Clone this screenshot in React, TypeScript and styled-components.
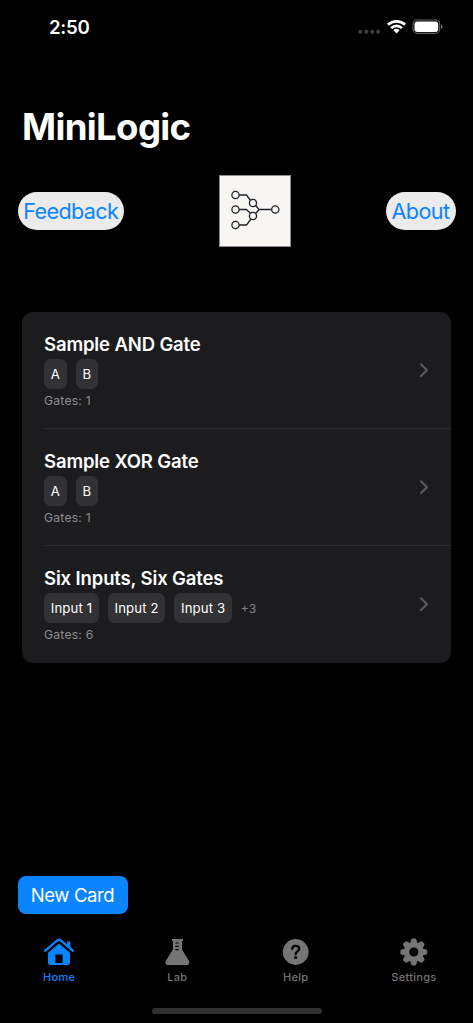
import React from 'react';
import styled, { createGlobalStyle } from 'styled-components';

const GlobalStyle = createGlobalStyle`
  * { box-sizing: border-box; }
  body { margin: 0; background: #000; }
`;

const Screen = styled.div`
  width: 473px;
  height: 1023px;
  display: flex;
  flex-direction: column;
  background: #000;
  color: #fff;
  font-family: Inter, 'Liberation Sans', sans-serif;
  white-space: nowrap;
  overflow: hidden;
`;

const StatusBar = styled.header`
  height: 54px;
  flex: none;
  display: flex;
  justify-content: space-between;
  padding: 0 30px 0 49px;
`;

const Clock = styled.span`
  font-size: 18.7px;
  font-weight: 600;
  line-height: 56px;
  letter-spacing: -0.3px;
`;

const StatusIcons = styled.svg`
  display: block;
  width: 86px;
  height: 54px;
`;

const Title = styled.h1`
  margin: 51px 0 0 22px;
  height: 46px;
  font-size: 36.6px;
  line-height: 45px;
  font-weight: 700;
  letter-spacing: -0.65px;
`;

const TopRow = styled.div`
  display: flex;
  align-items: center;
  justify-content: space-between;
  height: 72px;
  margin: 24px 17.5px 0 17.5px;
`;

const Pill = styled.button<{ $width: number; $tracking: number }>`
  width: ${(p) => p.$width}px;
  height: 38px;
  padding: 0;
  border: 0;
  border-radius: 19px;
  background: #ebebeb;
  color: #0a84ff;
  font: 400 21.6px/38px Inter, sans-serif;
  letter-spacing: ${(p) => p.$tracking}px;
`;

const Logo = styled.svg`
  display: block;
  width: 72px;
  height: 72px;
  margin-left: 0.5px;
`;

const CardList = styled.main`
  margin: 65px 22px 0;
  border-radius: 11px;
  background: #1c1c1e;
`;

const Row = styled.section`
  height: 117px;
  margin-left: 22px;
  padding: 20px 22px 0 0;
  display: flex;
  justify-content: space-between;
  border-bottom: 1px solid #2d2d2f;
  &:last-child { border-bottom-color: transparent; }
`;

const RowTitle = styled.h2`
  margin: 0;
  height: 27px;
  font-size: 18.5px;
  line-height: 24px;
  font-weight: 600;
  letter-spacing: -0.13px;
`;

const Chips = styled.div`
  display: flex;
  align-items: center;
  gap: 8.8px;
  height: 30px;
`;

const Chip = styled.span`
  height: 30px;
  padding: 0 6.8px;
  border-radius: 6.6px;
  background: #323234;
  font-size: 13.2px;
  line-height: 30px;
  letter-spacing: 0.11px;
`;

const More = styled.span`
  font-size: 12.1px;
  color: #85858a;
`;

const Gates = styled.p`
  margin: 3px 0 0;
  font-size: 12.1px;
  line-height: 17px;
  letter-spacing: 0.25px;
  color: #8d8d92;
`;

const Chevron = styled.svg`
  width: 10px;
  height: 16px;
  margin-top: 30px;
`;

const NewCard = styled.button`
  width: 110px;
  height: 38px;
  margin: auto 0 0 17.5px;
  padding: 0;
  flex: none;
  border: 0;
  border-radius: 8px;
  background: #0a84ff;
  color: #fff;
  font: 400 18.5px/38px Inter, sans-serif;
  letter-spacing: -0.38px;
`;

const TabBar = styled.nav`
  display: flex;
  height: 109px;
  flex: none;
  padding-top: 23px;
`;

const Tab = styled.a<{ $active?: boolean }>`
  flex: 1;
  display: flex;
  flex-direction: column;
  align-items: center;
  color: ${(p) => (p.$active ? '#0a84ff' : '#757575')};
  font-size: 11px;
  font-weight: 500;
  line-height: 16px;
  letter-spacing: 0.3px;
  svg { display: block; width: 32px; height: 32px; }
`;

const HomeIndicator = styled.div`
  width: 170px;
  height: 6px;
  border-radius: 3px;
  background: #303030;
  position: absolute;
  left: 152px;
  top: 1008px;
`;

const HomeIcon = () => (
  <svg viewBox="0 0 32 32" fill="currentColor">
    <path d="M2 15.2 14.6 4.5Q16 3.4 17.4 4.5L30 15.2" transform="translate(0 -1.4)" fill="none" stroke="currentColor" strokeWidth="2.2" strokeLinecap="round" strokeLinejoin="round" />
    <path d="M24.2 4.6h3.1v6.6l-3.1-2.6z" />
    <path fillRule="evenodd" d="M16 6.5 27 15.8V25.2Q27 27.9 24.3 27.9H7.7Q5 27.9 5 25.2V15.8ZM12.4 17.4V26H19.6V17.4Z" />
  </svg>
);

const FlaskIcon = () => (
  <svg viewBox="0 0 32 32" fill="currentColor">
    <path d="M11 2h11v1.9h-1V12.6L27.7 23.4C29 25.8 27.9 28 25.3 28H7.4C4.7 28 3.7 25.8 5 23.4L11.9 12.6V3.9H11Z" />
    <path d="M14.4 6h3.3M14.4 9.3h3.3M14.4 12.6h3.3" stroke="#000" strokeWidth="1.2" />
  </svg>
);

const HelpIcon = () => (
  <svg viewBox="0 0 32 32">
    <circle cx="15.7" cy="15" r="12.9" fill="currentColor" />
    <path d="M12.2 11.9C12.3 9.8 13.7 8.8 15.6 8.8C17.7 8.8 19.2 10 19.2 11.8C19.2 14.4 15.6 14.3 15.6 17.2" fill="none" stroke="#000" strokeWidth="2.3" strokeLinecap="round" />
    <circle cx="15.6" cy="20.5" r="1.6" />
  </svg>
);

const GearIcon = () => (
  <svg viewBox="0 0 32 32">
    <g fill="currentColor">
      {[0, 45, 90, 135].map((a) => (
        <path
          key={a}
          transform={`rotate(${a} 15.8 15)`}
          d="M12.2 6.5 13.2 2.7Q13.5 1.6 14.6 1.6H17Q18.1 1.6 18.4 2.7L19.4 6.5V23.5L18.4 27.3Q18.1 28.4 17 28.4H14.6Q13.5 28.4 13.2 27.3L12.2 23.5Z"
        />
      ))}
      <circle cx="15.8" cy="15" r="10" />
    </g>
    <circle cx="15.8" cy="15" r="4.6" fill="#000" />
  </svg>
);

const cards = [
  { title: 'Sample AND Gate', inputs: ['A', 'B'], gates: 1 },
  { title: 'Sample XOR Gate', inputs: ['A', 'B'], gates: 1 },
  { title: 'Six Inputs, Six Gates', inputs: ['Input 1', 'Input 2', 'Input 3'], more: 3, gates: 6 },
];

export default function App() {
  return (
    <Screen>
      <GlobalStyle />
      <StatusBar>
        <Clock>2:50</Clock>
        <StatusIcons viewBox="0 0 86 54">
          <g fill="#404040">
            <circle cx="3.3" cy="31.7" r="2" />
            <circle cx="9.3" cy="31.7" r="2" />
            <circle cx="15.2" cy="31.7" r="2" />
            <circle cx="21.1" cy="31.7" r="2" />
          </g>
          <g fill="none" stroke="#fff" strokeWidth="2.7">
            <path d="M31 24.7a12.4 12.4 0 0 1 17 0" />
            <path d="M34.1 28.1a7.8 7.8 0 0 1 10.8 0" />
          </g>
          <path d="M36.4 30.3a4.5 4.5 0 0 1 6.2 0L39.5 33.5Z" fill="#fff" />
          <rect x="56" y="20" width="26.7" height="13.4" rx="4.2" fill="none" stroke="#626262" strokeWidth="1.1" />
          <rect x="57.5" y="21.6" width="23.7" height="10.3" rx="2.7" fill="#fff" />
          <path d="M84 24.5q1.5.7 1.5 2.2t-1.5 2.2z" fill="#757575" />
        </StatusIcons>
      </StatusBar>
      <Title>MiniLogic</Title>
      <TopRow>
        <Pill $width={106.5} $tracking={-0.62}>Feedback</Pill>
        <Logo viewBox="0 0 72 72">
          <rect x="0.5" y="0.5" width="71" height="71" fill="#f7f6f3" stroke="#8c8c90" />
          <g fill="none" stroke="#20222a" strokeWidth="1.3">
            <circle cx="16.5" cy="20" r="3.6" />
            <circle cx="16.5" cy="34.5" r="3.6" />
            <circle cx="16.5" cy="50" r="3.6" />
            <circle cx="34" cy="28" r="3.6" />
            <circle cx="34" cy="41" r="3.6" />
            <circle cx="56.3" cy="34.5" r="3.6" />
            <path d="M20.1 20H27.5L31.5 25.5M20.1 34.5H27.5L31.5 38.5M20.1 50H27.5L32 44M36.6 30.5 40 34.5 36.6 38.5M40 34.5H52.7" />
          </g>
        </Logo>
        <Pill $width={70} $tracking={-0.55}>About</Pill>
      </TopRow>
      <CardList>
        {cards.map((c) => (
          <Row key={c.title}>
            <div>
              <RowTitle>{c.title}</RowTitle>
              <Chips>
                {c.inputs.map((i) => <Chip key={i}>{i}</Chip>)}
                {c.more && <More>+{c.more}</More>}
              </Chips>
              <Gates>Gates: {c.gates}</Gates>
            </div>
            <Chevron viewBox="0 0 10 16">
              <path d="M2 2.3 8 8.2 2 14.1" fill="none" stroke="#5b5b5f" strokeWidth="2.1" strokeLinecap="round" strokeLinejoin="round" />
            </Chevron>
          </Row>
        ))}
      </CardList>
      <NewCard>New Card</NewCard>
      <TabBar>
        <Tab $active><HomeIcon />Home</Tab>
        <Tab><FlaskIcon />Lab</Tab>
        <Tab><HelpIcon />Help</Tab>
        <Tab><GearIcon />Settings</Tab>
      </TabBar>
      <HomeIndicator />
    </Screen>
  );
}
